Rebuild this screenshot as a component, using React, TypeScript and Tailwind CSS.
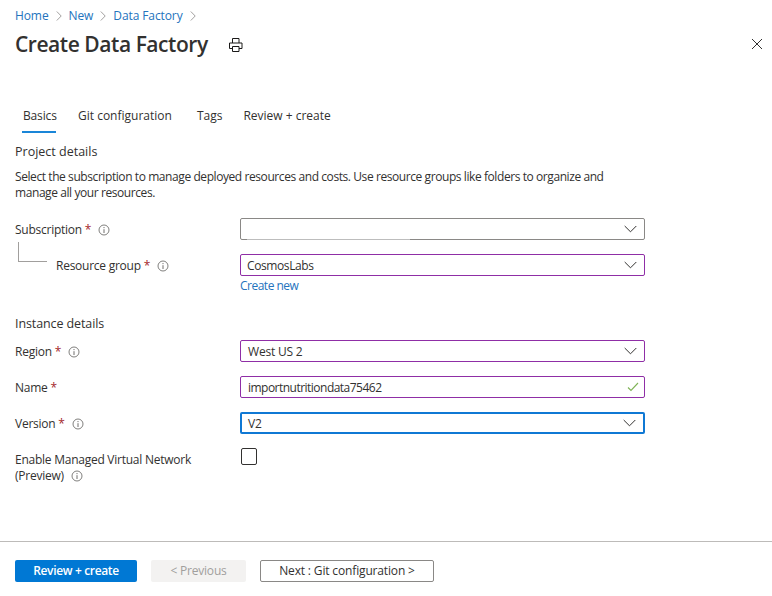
import React from "react";

function Info() {
  return (
    <svg width="12" height="12" viewBox="0 0 12 12" className="shrink-0" fill="none">
      <circle cx="6" cy="6" r="5" stroke="#605e5c" strokeWidth="0.8" />
      <path d="M6 5.2V9" stroke="#605e5c" strokeWidth="0.9" />
      <circle cx="6" cy="3.6" r="0.55" fill="#605e5c" />
    </svg>
  );
}

function Chevron() {
  return (
    <svg width="13" height="8" viewBox="0 0 13 8" fill="none" className="shrink-0">
      <path d="M.7 1l5.800 5.800L12.300 1" stroke="#323130" strokeWidth="1" />
    </svg>
  );
}

function Crumb() {
  return (
    <svg width="6" height="10" viewBox="0 0 6 10" fill="none" className="shrink-0">
      <path d="M.8.5 5.2 5 .8 9.5" stroke="#8a8886" strokeWidth="0.8" />
    </svg>
  );
}

function Req() {
  return <span className="text-[#a4262c]">*</span>;
}

function Field({ children, purple, focus, check, textClass = "" }: { children?: React.ReactNode; purple?: boolean; focus?: boolean; check?: boolean; textClass?: string }) {
  return (
    <div
      className={
        "relative w-[405px] h-[22px] rounded-[2px] flex items-center justify-between pr-[7px] text-[#323130] " +
        (purple ? "pl-[7px] border border-[#8f2ea6]" : focus ? "pl-[6px] border-2 border-[#0f78d4]" : "pl-[7px] border border-[#8a8886]")
      }
    >
      <span className={"pt-[1px] " + textClass}>{children}</span>
      {check ? (
        <svg width="12" height="10" viewBox="0 0 12 10" fill="none" className="shrink-0 mr-[-2px]">
          <path d="M1 5.5 4 8.5 11 1" stroke="#7fb356" strokeWidth="1.1" />
        </svg>
      ) : (
        <Chevron />
      )}
    </div>
  );
}

function Row({ label, children, className = "" }: { label: React.ReactNode; children: React.ReactNode; className?: string }) {
  return (
    <div className={"flex items-center h-[22px] " + className}>
      <div className="w-[225px] flex items-center gap-[7px] pt-[1px] tracking-[-0.25px] text-[#323130]">{label}</div>
      {children}
    </div>
  );
}

export default function App() {
  return (
    <div className="relative w-[772px] h-[596px] bg-white overflow-hidden flex flex-col text-[12px] leading-[16px] text-[#323130] font-['Open_Sans','Noto_Sans',sans-serif] tracking-[-0.2px]">
      <div className="flex items-center gap-[7px] pl-[15px] pt-[8px] text-[#2473bd] h-[23px] tracking-[-0.1px]">
        <span>Home</span>
        <Crumb />
        <span>New</span>
        <Crumb />
        <span>Data Factory</span>
        <Crumb />
      </div>
      <div className="flex items-center justify-between pl-[15px] pr-[9px] mt-[4px] h-[34px]">
        <div className="flex items-center">
          <h1 className="text-[21px] leading-[28px] font-semibold text-[#323130] tracking-[-0.45px]">Create Data Factory</h1>
          <svg width="14" height="14" viewBox="0 0 14 14" fill="none" className="ml-[21px] mt-[1px]">
            <path d="M3.500 5V.5h6.500V5M3.500 10.500H.500V5h12.500v5.500h-3M3.500 8.500h6.500v5h-6.500z" stroke="#1b1a19" strokeWidth="1" />
          </svg>
        </div>
        <svg width="12" height="12" viewBox="0 0 12 12" fill="none">
          <path d="M1 1l10 10M11 1 1 11" stroke="#323130" strokeWidth="1" />
        </svg>
      </div>

      <div className="flex pl-[22px] mt-[47px] text-[#323130] tracking-[0px]">
        <div className="border-b-2 border-[#1a86d8] h-[25px] w-[34px] pb-[8px] pl-[1px] tracking-[-0.15px]">Basics</div>
        <div className="ml-[22px]">Git configuration</div>
        <div className="ml-[25px]">Tags</div>
        <div className="ml-[21px]">Review + create</div>
      </div>

      <div className="pl-[15px] mt-[11px] text-[12.500px] font-medium tracking-[0px]">Project details</div>
      <div className="pl-[15px] mt-[9px] w-[625px] leading-[16px] tracking-[-0.42px]">
        Select the subscription to manage deployed resources and costs. Use resource groups like folders to organize and manage all your resources.
      </div>

      <div className="pl-[15px] mt-[17px]">
        <Row label={<><span>Subscription <Req /></span><Info /></>}>
          <div className="relative">
            <Field />
            <div className="absolute left-[7px] bottom-0 w-[163px] h-px bg-[#bdbdbd]" />
          </div>
        </Row>
        <div className="flex h-[22px] mt-[14px] items-center relative">
          <div className="absolute left-[3px] top-[-12px] w-[29px] h-[20px] border-l border-b border-[#a19f9d]" />
          <div className="w-[225px] pl-[41px] pt-[1px] flex items-center gap-[7px] tracking-[-0.25px]">
            <span>Resource group <Req /></span>
            <Info />
          </div>
          <Field purple textClass="tracking-[-0.4px] ml-[-1px]">CosmosLabs</Field>
        </div>
        <div className="pl-[225px] mt-[2px] text-[#2473bd] h-[16px] tracking-[-0.5px]">Create new</div>

        <div className="mt-[22px] text-[12.500px] font-medium tracking-[-0.1px]">Instance details</div>
        <Row className="mt-[8px]" label={<><span>Region <Req /></span><Info /></>}>
          <Field purple>West US 2</Field>
        </Row>
        <Row className="mt-[14px]" label={<span>Name <Req /></span>}>
          <Field purple check textClass="tracking-[-0.52px]">importnutritiondata75462</Field>
        </Row>
        <Row className="mt-[14px]" label={<><span>Version <Req /></span><Info /></>}>
          <Field focus>V2</Field>
        </Row>
        <div className="flex mt-[14px]">
          <div className="w-[225px] pt-[4px] tracking-[-0.25px]">
            <div>Enable Managed Virtual Network</div>
            <div className="flex items-center gap-[7px]">(Preview) <Info /></div>
          </div>
          <div className="ml-[1px] w-[16px] h-[17px] border border-[#323130] rounded-[2px]" />
        </div>
      </div>

      <div className="mt-auto border-t border-[#bdbbb9] h-[55px] pl-[15px] pt-[18px] flex items-start">
        <button className="w-[122px] h-[22px] rounded-[2px] bg-[#0078d4] text-white font-semibold tracking-[-0.35px]">Review + create</button>
        <button className="w-[95px] h-[22px] ml-[14px] rounded-[2px] bg-[#f3f2f1] text-[#a19f9d] font-medium">&lt; Previous</button>
        <button className="w-[174px] h-[22px] ml-[14px] rounded-[2px] border border-[#8a8886] text-[#323130] font-medium tracking-[-0.15px]">Next : Git configuration &gt;</button>
      </div>
    </div>
  );
}
